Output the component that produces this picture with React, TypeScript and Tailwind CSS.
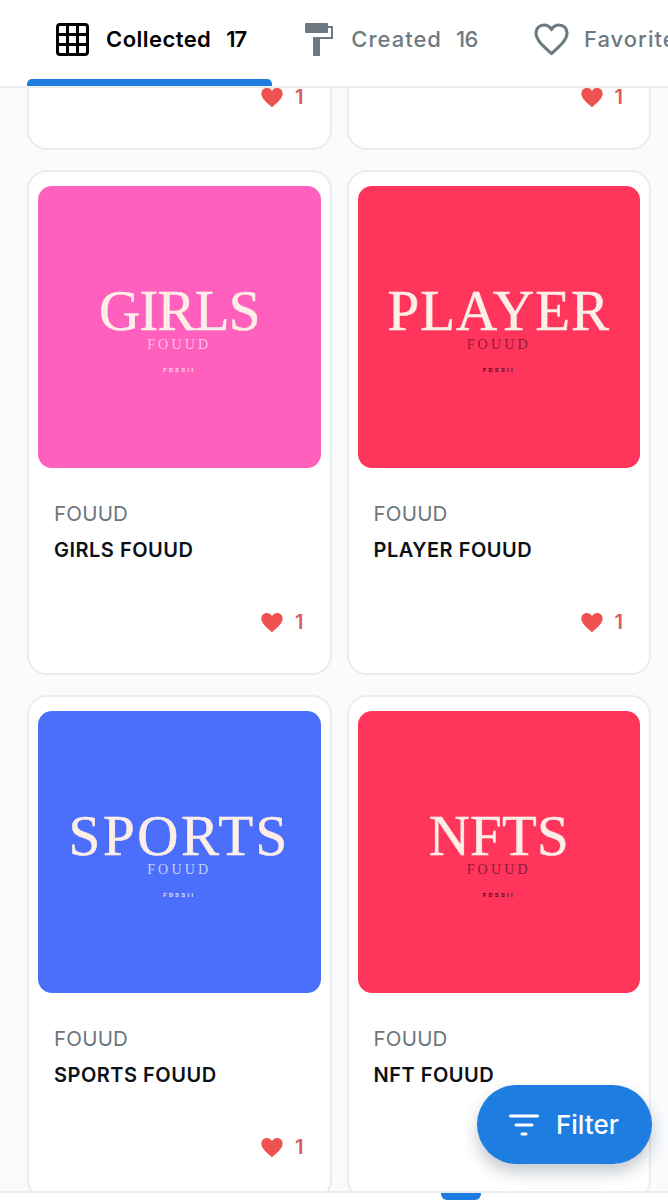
import React from "react";

type Item = {
  art: string;
  name: string;
  bg: string;
  artSize: string;
  sub: string;
  tiny: string;
};

const rowZero: Item[] = [
  { art: "", name: "", bg: "bg-[#4c6ffb]", artSize: "text-[57px]", sub: "text-[#c3cffc]", tiny: "text-[#e4e9ff]" },
  { art: "", name: "", bg: "bg-[#ff355c]", artSize: "text-[57px]", sub: "text-[#8a1c3a]", tiny: "text-[#3a0a18]" },
];

const items: Item[] = [
  { art: "GIRLS", name: "GIRLS FOUUD", bg: "bg-[#ff5fbd]", artSize: "text-[57px] tracking-[-0.8px]", sub: "text-[#ffc4e6]", tiny: "text-[#ffe0f2]" },
  { art: "PLAYER", name: "PLAYER FOUUD", bg: "bg-[#ff355c]", artSize: "text-[57px] tracking-[1px]", sub: "text-[#8a1c3a]", tiny: "text-[#3a0a18]" },
  { art: "SPORTS", name: "SPORTS FOUUD", bg: "bg-[#4c6ffb]", artSize: "text-[57px] tracking-[2.6px]", sub: "text-[#c3cffc]", tiny: "text-[#e4e9ff]" },
  { art: "NFTS", name: "NFT FOUUD", bg: "bg-[#ff355c]", artSize: "text-[57px] tracking-[0.2px]", sub: "text-[#8a1c3a]", tiny: "text-[#3a0a18]" },
];

function Heart({ className }: { className: string }) {
  return (
    <svg viewBox="0 0 24 22" className={className} fill="currentColor">
      <path d="M12 21.5 C5 15.6 0.4 11.6 0.4 6.6 C0.4 3 3.1 0.5 6.3 0.5 C8.5 0.5 10.7 1.6 12 3.9 C13.3 1.6 15.5 0.5 17.7 0.5 C20.9 0.5 23.6 3 23.6 6.6 C23.6 11.6 19 15.6 12 21.5 Z" />
    </svg>
  );
}

function Card({ item }: { item: Item }) {
  return (
    <div className="h-[505px] flex flex-col bg-white border-2 border-[#e9edef] rounded-[20px] pt-[14px] px-[9px]">
      <div className={`h-[282px] rounded-[14px] flex flex-col items-center pt-[100px] font-['Liberation_Serif',serif] ${item.bg}`}>
        <div className={`h-[50px] leading-[50px] text-[#fdeee8] [-webkit-text-stroke:0.5px_#fdeee8] ${item.artSize}`}>{item.art}</div>
        {item.art && (
          <>
            <div className={`mt-[1px] h-4 leading-4 text-[14px] tracking-[3.2px] ${item.sub}`}>FOUUD</div>
            <div className={`mt-[14px] h-[6px] leading-[6px] text-[5.5px] font-bold tracking-[2.4px] font-['Liberation_Sans',sans-serif] ${item.tiny}`}>FDSSII</div>
          </>
        )}
      </div>
      <div className="pl-[8px] pt-[30px] text-[#6b767d] text-[20.5px] leading-[32px] tracking-[0.2px] ml-[8px]">FOUUD</div>
      <div className="pl-[8px] pt-[4px] text-[#0b1118] text-[20px] leading-[32px] font-semibold tracking-[0.5px] ml-[8px]">{item.name}</div>
      <div className="mt-auto mb-[39px] flex items-center justify-end pr-[17px] gap-[12px] text-[#ef5350]">
        <Heart className="w-[22px] h-[21px]" />
        <span className="text-[20px] leading-[24px] font-semibold text-[#dc5a5e]">1</span>
      </div>
    </div>
  );
}

export default function App() {
  return (
    <div className="relative w-[668px] h-[1200px] overflow-hidden flex flex-col bg-white font-['Inter',sans-serif]">
      <header className="relative z-10 h-[88px] shrink-0 flex bg-white border-b-2 border-[#e9edef] pl-[56px] pb-[8px] items-center whitespace-nowrap overflow-hidden">
        <div className="flex items-center text-[#000] shrink-0">
          <svg viewBox="0 0 33 33" className="w-[33px] h-[33px]" fill="none" stroke="currentColor" strokeWidth="3">
            <rect x="1.5" y="1.5" width="30" height="30" rx="2.5" />
            <path d="M11.5 2v29M21.5 2v29M2 11.5h29M2 21.5h29" />
          </svg>
          <span className="ml-[17px] text-[22px] font-semibold leading-8 tracking-[0.45px]">Collected</span>
          <span className="ml-[15px] w-[22px] text-[22px] font-semibold leading-8 tracking-[-1px]">17</span>
        </div>
        <div className="ml-[57px] flex items-center text-[#6e7a81] shrink-0">
          <svg viewBox="0 0 28 33" className="w-[28px] h-[33px]" fill="currentColor">
            <rect x="0" y="0" width="23" height="10" rx="1" />
            <path d="M23 3h5v13H15v17H8V14h18V5h-3z" />
          </svg>
          <span className="ml-[18px] text-[22px] font-medium leading-8 tracking-[1px]">Created</span>
          <span className="ml-[14px] w-[24px] text-[22px] font-medium leading-8 tracking-[-0.5px]">16</span>
        </div>
        <div className="ml-[54px] flex items-center text-[#6e7a81] shrink-0">
          <svg viewBox="0 0 36 34" className="w-[35px] h-[33px]" fill="none" stroke="currentColor" strokeWidth="3.2" strokeLinejoin="round">
            <path d="M18 31.5 C8 22.5 2 17 2 10.4 C2 5.4 5.8 2 10.2 2 C13.3 2 16.4 3.6 18 6.8 C19.6 3.6 22.7 2 25.8 2 C30.2 2 34 5.4 34 10.4 C34 17 28 22.5 18 31.5 Z" />
          </svg>
          <span className="ml-[15px] text-[22px] font-medium leading-8 tracking-[1px]">Favorites</span>
        </div>
        <div className="absolute left-[27px] bottom-0 w-[245px] h-[7px] rounded-t-[5px] bg-[#1e7de0]" />
      </header>

      <main className="flex-1 min-h-0 overflow-hidden bg-[#f9fbfd] pl-[27px] pr-[17px]">
        <div className="-mt-[443px] grid grid-cols-2 gap-x-[15px] gap-y-[20px]">
          {rowZero.map((it, i) => (
            <Card key={`z${i}`} item={it} />
          ))}
          {items.map((it) => (
            <Card key={it.name} item={it} />
          ))}
        </div>
      </main>

      <footer className="h-[9px] shrink-0 bg-white border-t-2 border-[#e9edef] pl-[441px]">
        <div className="w-10 h-[7px] rounded-b-[6px] bg-[#1e7de0]" />
      </footer>

      <button className="absolute left-[477px] top-[1085px] w-[175px] h-[79px] rounded-full bg-[#1e7de0] text-white flex items-center pl-[32px] shadow-[0_8px_16px_rgba(40,60,80,0.28)]">
        <svg viewBox="0 0 30 22" className="w-[30px] h-[22px]" fill="none" stroke="currentColor" strokeWidth="3" strokeLinecap="round">
          <path d="M1.5 2h27M7 11h16M13 20h4" />
        </svg>
        <span className="ml-[17px] text-[26px] font-medium leading-8">Filter</span>
      </button>
    </div>
  );
}
